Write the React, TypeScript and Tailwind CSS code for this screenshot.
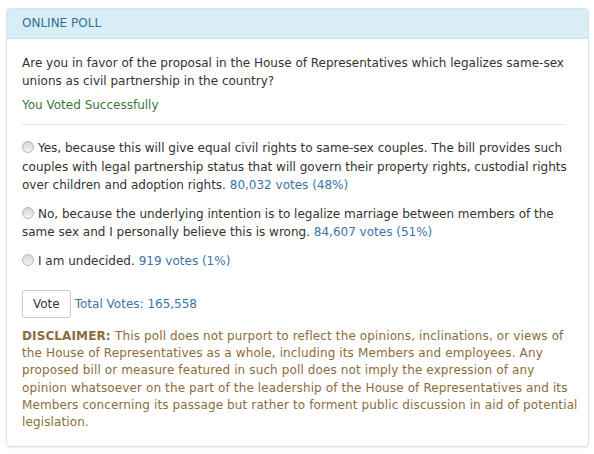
const options = [
  {
    label:
      "Yes, because this will give equal civil rights to same-sex couples. The bill provides such couples with legal partnership status that will govern their property rights, custodial rights over children and adoption rights.",
    votes: "80,032 votes (48%)",
  },
  {
    label:
      "No, because the underlying intention is to legalize marriage between members of the same sex and I personally believe this is wrong.",
    votes: "84,607 votes (51%)",
  },
  { label: "I am undecided.", votes: "919 votes (1%)" },
];

const disclaimer = [
  "This poll does not purport to reflect the opinions, inclinations, or views of",
  "the House of Representatives as a whole, including its Members and employees. Any",
  "proposed bill or measure featured in such poll does not imply the expression of any",
  "opinion whatsoever on the part of the leadership of the House of Representatives and its",
  "Members concerning its passage but rather to forment public discussion in aid of potential",
  "legislation.",
];

function Radio() {
  return (
    <span className="inline-block w-[12px] h-[12px] rounded-full border border-[#b5b5b5] bg-gradient-to-b from-[#d6d6d6] to-[#f4f4f4] align-[-1px] mr-[4px]" />
  );
}

export default function App() {
  return (
    <div className="w-[594px] h-[454px] bg-white pt-[8px] pl-[6px] font-['DejaVu_Sans',Verdana,sans-serif] text-[12px] leading-[17px] text-[#333]">
      <div className="w-[583px] border border-[#d6e4ea] rounded-[4px] shadow-[0_1px_2px_rgba(0,0,0,0.08)] overflow-hidden">
        <div className="h-[30px] bg-[#d9edf7] border-b border-[#bce8f1] px-[15px] flex items-center text-[#31708f]">
          ONLINE POLL
        </div>
        <div className="px-[15px] pt-[15px] pb-[15px]">
          <p className="leading-[18px]">
            Are you in favor of the proposal in the House of Representatives which legalizes same-sex unions as civil partnership in the country?
          </p>
          <p className="mt-[7px] text-[#3c763d]">You Voted Successfully</p>
          <div className="mt-[10px] mr-[9px] border-t border-[#e3e3e3]" />
          <div className="mt-[14px] flex flex-col gap-[10px] leading-[18.5px]">
            {options.map((o) => (
              <p key={o.votes}>
                <Radio />
                {o.label} <span className="text-[#3a75a8]">{o.votes}</span>
              </p>
            ))}
          </div>
          <div className="mt-[20px] flex items-center gap-[4px]">
            <button className="h-[28px] px-[10px] border border-[#ccc] rounded-[3px] bg-white text-[#333]">
              Vote
            </button>
            <span className="text-[#3a75a8]">Total Votes: 165,558</span>
          </div>
          <div className="mt-[10px] leading-[17.2px] tracking-[0.12px] text-[#8a6d3b] whitespace-nowrap">
            {disclaimer.map((line, i) => (
              <p key={i}>
                {i === 0 && <b>DISCLAIMER: </b>}
                {line}
              </p>
            ))}
          </div>
        </div>
      </div>
    </div>
  );
}
